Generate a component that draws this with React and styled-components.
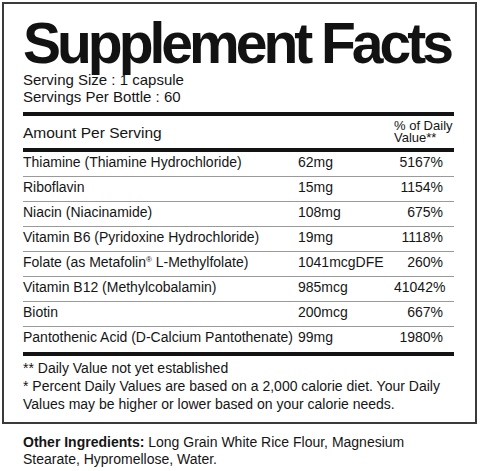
import React from "react";
import styled, { createGlobalStyle } from "styled-components";

const GlobalStyle = createGlobalStyle`
  html, body { margin: 0; padding: 0; background: #ffffff; }
  body {
    font-family: "Liberation Sans", Arial, Helvetica, sans-serif;
    color: #151515;
  }
`;

const Page = styled.div`
  padding: 2px 3px 0 2px;
  width: 480px;
  box-sizing: border-box;
`;

const Label = styled.section`
  box-sizing: border-box;
  width: 475px;
  border: 2px solid #3a3a3a;
  padding: 12px 21px 9px 19px;
`;

const Title = styled.h1`
  margin: 0;
  font-size: 57px;
  line-height: 54px;
  font-weight: 700;
  letter-spacing: -4px;
  color: #121212;
  white-space: nowrap;
`;

const ServingLine = styled.div`
  font-size: 15px;
  line-height: 17px;
  &:first-of-type { margin-top: 1px; }
`;

const Bar = styled.div`
  height: 4px;
  background: #131313;
  margin-top: ${(p) => p.$mt || 0}px;
`;

const Grid = styled.div`
  display: grid;
  grid-template-columns: 275px 96px 1fr;
`;

const HeaderRow = styled(Grid)`
  height: 32px;
  align-items: end;
`;

const HeaderLabel = styled.div`
  font-size: 15.5px;
  line-height: 17px;
  margin-bottom: 7px;
`;

const DailyHead = styled.div`
  grid-column: 3;
  font-size: 13px;
  line-height: 12px;
  margin-bottom: 4px;
  white-space: nowrap;
`;

const Row = styled(Grid)`
  box-sizing: border-box;
  height: 25px;
  font-size: 14px;
  line-height: 21px;
  padding-bottom: 3px;
  border-bottom: ${(p) => (p.$last ? "none" : "1px solid #9a9a9a")};
  white-space: nowrap;
`;

const Name = styled.div``;

const Amount = styled.div``;

const Percent = styled.div`
  text-align: right;
  padding-right: 11px;
`;

const Reg = styled.sup`
  font-size: 8px;
  line-height: 0;
  vertical-align: 5px;
`;

const Notes = styled.div`
  padding-top: 3px;
  font-size: 14px;
  line-height: 18px;
`;

const Ingredients = styled.p`
  margin: 10px 0 0;
  padding: 0 26px 0 21px;
  font-size: 14px;
  line-height: 17px;
  width: 475px;
  box-sizing: border-box;
`;

const Strong = styled.strong`
  font-weight: 700;
`;

const rows = [
  ["Thiamine (Thiamine Hydrochloride)", "62mg", "5167%"],
  ["Riboflavin", "15mg", "1154%"],
  ["Niacin (Niacinamide)", "108mg", "675%"],
  ["Vitamin B6 (Pyridoxine Hydrochloride)", "19mg", "1118%"],
  [
    <>
      Folate (as Metafolin<Reg>®</Reg> L-Methylfolate)
    </>,
    "1041mcgDFE",
    "260%",
  ],
  ["Vitamin B12 (Methylcobalamin)", "985mcg", "41042%"],
  ["Biotin", "200mcg", "667%"],
  ["Pantothenic Acid (D-Calcium Pantothenate)", "99mg", "1980%"],
];

export default function App() {
  return (
    <Page>
      <GlobalStyle />
      <Label>
        <Title>Supplement Facts</Title>
        <ServingLine>Serving Size : 1 capsule</ServingLine>
        <ServingLine>Servings Per Bottle : 60</ServingLine>
        <Bar $mt={7} />
        <HeaderRow>
          <HeaderLabel>Amount Per Serving</HeaderLabel>
          <DailyHead>
            % of Daily
            <br />
            Value**
          </DailyHead>
        </HeaderRow>
        <Bar />
        {rows.map((r, i) => (
          <Row key={i} $last={i === rows.length - 1}>
            <Name>{r[0]}</Name>
            <Amount>{r[1]}</Amount>
            <Percent>{r[2]}</Percent>
          </Row>
        ))}
        <Bar />
        <Notes>
          ** Daily Value not yet established
          <br />* Percent Daily Values are based on a 2,000 calorie diet. Your
          Daily Values may be higher or lower based on your calorie needs.
        </Notes>
      </Label>
      <Ingredients>
        <Strong>Other Ingredients:</Strong> Long Grain White Rice Flour,
        Magnesium Stearate, Hypromellose, Water.
      </Ingredients>
    </Page>
  );
}
